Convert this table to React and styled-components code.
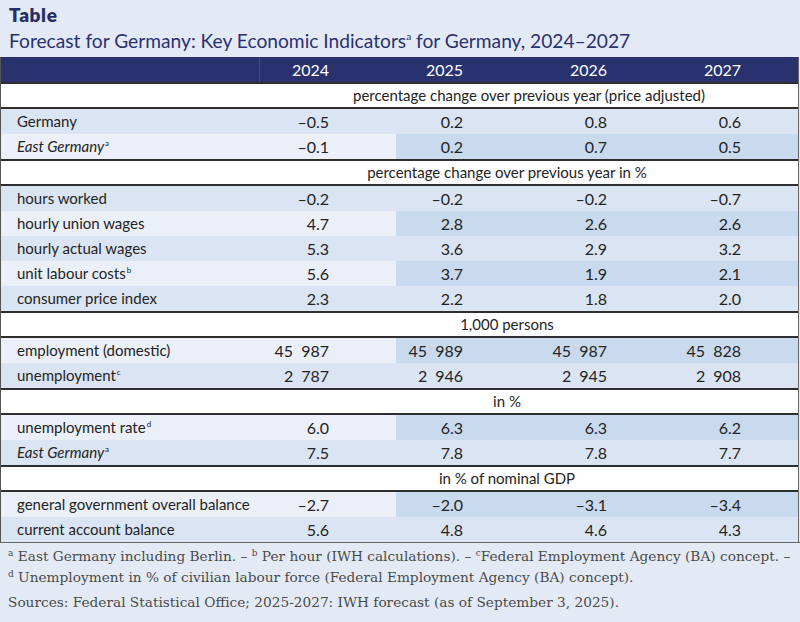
import React from "react";
import styled, { createGlobalStyle } from "styled-components";

const GlobalStyle = createGlobalStyle`
  body {
    margin: 0;
    background: #e3eaf5;
    font-family: Lato, "Noto Sans", sans-serif;
  }
`;

const years = ["2024", "2025", "2026", "2027"];
const pads = [67, 67, 57, 57];

const blocks = [
  {
    section: "percentage change over previous year (price adjusted)",
    shift: 44,
    rows: [
      { label: "Germany", values: ["–0.5", "0.2", "0.8", "0.6"] },
      { label: "East Germany", sup: "a", italic: true, values: ["–0.1", "0.2", "0.7", "0.5"] },
    ],
  },
  {
    section: "percentage change over previous year in %",
    rows: [
      { label: "hours worked", values: ["–0.2", "–0.2", "–0.2", "–0.7"] },
      { label: "hourly union wages", values: ["4.7", "2.8", "2.6", "2.6"] },
      { label: "hourly actual wages", values: ["5.3", "3.6", "2.9", "3.2"] },
      { label: "unit labour costs", sup: "b", values: ["5.6", "3.7", "1.9", "2.1"] },
      { label: "consumer price index", values: ["2.3", "2.2", "1.8", "2.0"] },
    ],
  },
  {
    section: "1,000 persons",
    rows: [
      { label: "employment (domestic)", values: ["45\u2002987", "45\u2002989", "45\u2002987", "45\u2002828"] },
      { label: "unemployment", sup: "c", values: ["2\u2002787", "2\u2002946", "2\u2002945", "2\u2002908"] },
    ],
  },
  {
    section: "in %",
    rows: [
      { label: "unemployment rate", sup: "d", values: ["6.0", "6.3", "6.3", "6.2"] },
      { label: "East Germany", sup: "a", italic: true, values: ["7.5", "7.8", "7.8", "7.7"] },
    ],
  },
  {
    section: "in % of nominal GDP",
    rows: [
      { label: "general government overall balance", values: ["–2.7", "–2.0", "–3.1", "–3.4"] },
      { label: "current account balance", values: ["5.6", "4.8", "4.6", "4.3"] },
    ],
  },
];

function App() {
  let index = 0;
  return (
    <Page>
      <GlobalStyle />
      <Heading>Table</Heading>
      <Subtitle>
        Forecast for Germany: Key Economic Indicators<TitleSup>a</TitleSup> for Germany, 2024–2027
      </Subtitle>
      <Grid>
        <HeadRow>
          <HeadCell />
          {years.map((y, i) => (
            <HeadCell key={y} $pad={pads[i]}>
              {y}
            </HeadCell>
          ))}
        </HeadRow>
        {blocks.map((block) => (
          <React.Fragment key={block.section}>
            <SectionRow>
              <SectionText $shift={block.shift || 0}>{block.section}</SectionText>
            </SectionRow>
            {block.rows.map((row) => {
              index += 1;
              const striped = index % 2 === 0;
              return (
                <DataRow key={row.label + index}>
                  <LabelCell $striped={striped} $italic={row.italic}>
                    {row.label}
                    {row.sup && <Sup>{row.sup}</Sup>}
                  </LabelCell>
                  {row.values.map((v, i) => (
                    <ValueCell key={i} $pad={pads[i]} $striped={striped} $forecast={i > 0}>
                      {v}
                    </ValueCell>
                  ))}
                </DataRow>
              );
            })}
          </React.Fragment>
        ))}
      </Grid>
      <Notes>
        <NoteLine>
          <NoteSup>a</NoteSup> East Germany including Berlin. – <NoteSup>b</NoteSup> Per hour (IWH calculations). –{" "}
          <NoteSup>c</NoteSup>Federal Employment Agency (BA) concept. –
        </NoteLine>
        <NoteLine>
          <NoteSup>d</NoteSup> Unemployment in % of civilian labour force (Federal Employment Agency (BA) concept).
        </NoteLine>
        <Source>Sources: Federal Statistical Office; 2025-2027: IWH forecast (as of September 3, 2025).</Source>
      </Notes>
    </Page>
  );
}

export default App;

const Page = styled.div`
  width: 800px;
  height: 622px;
  overflow: hidden;
  color: #242424;
`;

const Heading = styled.div`
  padding: 2px 0 0 9px;
  height: 26px;
  font-size: 19px;
  letter-spacing: 0.6px;
  font-weight: 800;
  color: #262d68;
  line-height: 26px;
`;

const Subtitle = styled.div`
  padding-left: 9px;
  height: 29px;
  font-size: 19.2px;
  line-height: 26px;
  color: #2a3170;
`;

const TitleSup = styled.sup`
  font-size: 10px;
  vertical-align: 8px;
  line-height: 0;
`;

const Grid = styled.div`
  width: 797px;
  border-left: 1px solid #555;
  border-right: 1px solid #666;
`;

const columns = "258px 137px 134px 134px 134px";

const HeadRow = styled.div`
  display: grid;
  grid-template-columns: ${columns};
  height: 25px;
  background: #29316f;
  color: #fff;
`;

const HeadCell = styled.div`
  font-size: 16px;
  line-height: 25px;
  text-align: right;
  padding-right: ${(p) => p.$pad || 0}px;
  &:nth-child(2) {
    border-left: 1px solid #444c88;
  }
`;

const SectionRow = styled.div`
  height: 23px;
  background: #fff;
  border-top: 2px solid #2e2e2e;
  border-bottom: 2px solid #2e2e2e;
  display: flex;
  padding-left: 258px;
  padding-right: 43px;
`;

const SectionText = styled.div`
  flex: 1;
  text-align: center;
  font-size: 15px;
  line-height: 23px;
  padding-left: ${(p) => p.$shift}px;
  white-space: nowrap;
`;

const DataRow = styled.div`
  display: grid;
  grid-template-columns: ${columns};
  height: 25px;
`;

const LabelCell = styled.div`
  padding-left: 16px;
  font-size: 15px;
  line-height: 25px;
  font-style: ${(p) => (p.$italic ? "italic" : "normal")};
  background: ${(p) => (p.$striped ? "#eaeff8" : "#dbe4f2")};
  white-space: nowrap;
`;

const Sup = styled.sup`
  font-size: 8px;
  vertical-align: 6px;
  line-height: 0;
  font-style: normal;
  margin-left: 1px;
`;

const ValueCell = styled.div`
  text-align: right;
  padding-right: ${(p) => p.$pad}px;
  font-size: 16px;
  line-height: 25px;
  white-space: nowrap;
  background: ${(p) =>
    p.$striped ? (p.$forecast ? "#c9d9ee" : "#eaeff8") : "#dbe4f2"};
`;

const Notes = styled.div`
  border-top: 1px solid #666;
  padding: 3px 0 0 8px;
  font-family: "DejaVu Serif", "Liberation Serif", serif;
  color: #4a4a4a;
  font-size: 13.7px;
`;

const NoteLine = styled.div`
  line-height: 21px;
  white-space: nowrap;
`;

const NoteSup = styled.sup`
  font-size: 9px;
  vertical-align: 5px;
  line-height: 0;
`;

const Source = styled.div`
  margin-top: 4px;
  line-height: 21px;
`;
